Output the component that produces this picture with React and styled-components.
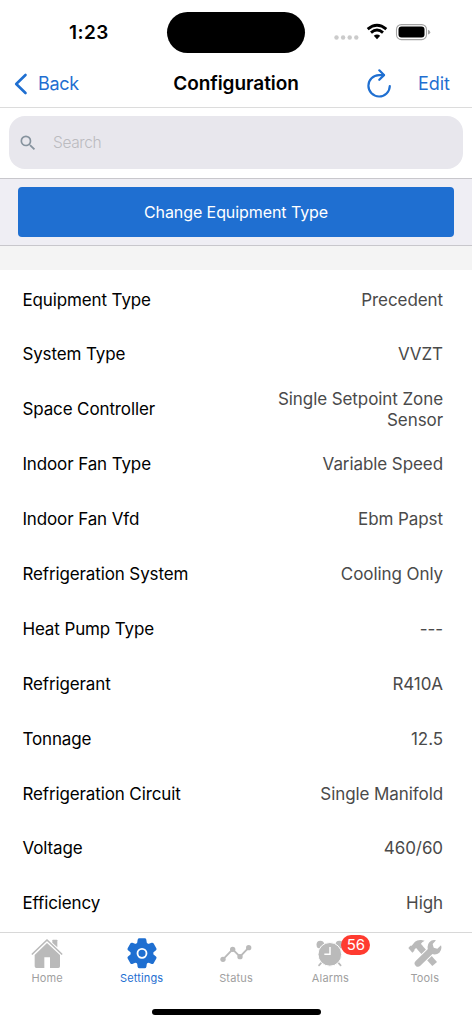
import React from "react";
import styled, { createGlobalStyle } from "styled-components";
import { MdSearch } from "react-icons/md";

const rows = [
  { label: "Equipment Type", value: "Precedent" },
  { label: "System Type", value: "VVZT" },
  { label: "Space Controller", value: "Single Setpoint Zone Sensor" },
  { label: "Indoor Fan Type", value: "Variable Speed" },
  { label: "Indoor Fan Vfd", value: "Ebm Papst" },
  { label: "Refrigeration System", value: "Cooling Only" },
  { label: "Heat Pump Type", value: "---" },
  { label: "Refrigerant", value: "R410A" },
  { label: "Tonnage", value: "12.5" },
  { label: "Refrigeration Circuit", value: "Single Manifold" },
  { label: "Voltage", value: "460/60" },
  { label: "Efficiency", value: "High" },
];

const HomeIcon = () => (
  <svg width="34" height="32" viewBox="90 36 102 96">
    <path
      d="M97 87 L141 45 L185 87"
      fill="none"
      stroke="currentColor"
      strokeWidth="5"
      strokeLinecap="round"
      strokeLinejoin="round"
    />
    <path
      d="M157 53 V46 Q157 44 159 44 H170 Q172 44 172 46 V67 Z"
      fill="currentColor"
    />
    <path
      d="M141 54 L180 90 V124 Q180 129 175 129 H150 V97 H133 V129 H109 Q104 129 104 124 V90 Z"
      fill="currentColor"
    />
  </svg>
);

const teeth = [0, 60, 120, 180, 240, 300];

const GearIcon = () => (
  <svg width="34" height="32" viewBox="-51 -49 102 96">
    <circle r="34" fill="currentColor" />
    {teeth.map((deg) => (
      <path
        key={deg}
        transform={`rotate(${deg})`}
        d="M-15 -28 L-13 -41 Q-12 -45 -8 -45 H8 Q12 -45 13 -41 L15 -28 Z"
        fill="currentColor"
      />
    ))}
    <circle r="13.500" fill="none" stroke="#fff" strokeWidth="5.500" />
  </svg>
);

const StatusIcon = () => (
  <svg width="34" height="32" viewBox="86 36 102 96">
    <path
      d="M98 103 L127 73 L149 95 L175 68"
      fill="none"
      stroke="currentColor"
      strokeWidth="5.500"
    />
    <g fill="currentColor">
      <circle cx="98" cy="103" r="8" />
      <circle cx="127" cy="73" r="8" />
      <circle cx="149" cy="95" r="8" />
      <circle cx="175" cy="68" r="8" />
    </g>
  </svg>
);

const AlarmIcon = () => (
  <svg width="34" height="32" viewBox="40 36 102 96">
    <g fill="currentColor">
      <circle cx="62" cy="59" r="11.500" />
      <circle cx="119" cy="59" r="11.500" />
    </g>
    <path
      d="M66 112 L58 121 M115 112 L123 121"
      stroke="currentColor"
      strokeWidth="5"
      strokeLinecap="round"
    />
    <circle cx="90.500" cy="88" r="35.500" fill="currentColor" stroke="#fff" strokeWidth="3" />
    <path d="M91 66 V88 H74" fill="none" stroke="#fff" strokeWidth="4.500" />
  </svg>
);

const ToolsIcon = () => (
  <svg width="34" height="32" viewBox="322 36 102 96">
    <path
      d="M323 69 L329 62 L333 62 L343 50 Q350 44 362 45 L372 47 Q363 51 361 56 L366 64 L354 76 L346 69 L341 74 L341 77 L335 83 Z"
      fill="currentColor"
    />
    <path d="M357 67 L402 117" stroke="currentColor" strokeWidth="19" fill="none" />
    <path
      d="M352 115 L392 76"
      stroke="#fff"
      strokeWidth="26"
      strokeLinecap="round"
    />
    <path
      d="M352 115 L392 76"
      stroke="currentColor"
      strokeWidth="20"
      strokeLinecap="round"
    />
    <path
      d="M406 46 L396 57 L399 68 L410 71 L421 61 Q425 74 416 83 Q407 91 394 87 L382 74 Q378 61 386 52 Q394 43 406 46 Z"
      fill="currentColor"
    />
  </svg>
);

const tabs = [
  { name: "Home", icon: <HomeIcon /> },
  { name: "Settings", icon: <GearIcon />, active: true },
  { name: "Status", icon: <StatusIcon /> },
  { name: "Alarms", icon: <AlarmIcon />, badge: 56 },
  { name: "Tools", icon: <ToolsIcon /> },
];

const App = () => {
  return (
    <Screen>
      <GlobalStyle />
      <StatusBar>
        <Clock>1:23</Clock>
        <Island />
        <Indicators>
          <svg width="98" height="20" viewBox="0 0 98 20">
            <g fill="#cbcbcb">
              <circle cx="3.500" cy="14.500" r="2.200" />
              <circle cx="10.100" cy="14.500" r="2.200" />
              <circle cx="16.700" cy="14.500" r="2.200" />
              <circle cx="23.300" cy="14.500" r="2.200" />
            </g>
            <g fill="none" stroke="#000" strokeWidth="2.900">
              <path d="M34.700 6.100 Q44 -1.600 53.300 6.100" />
              <path d="M38 9.700 Q44 4.500 50 9.700" />
            </g>
            <path d="M40.800 12.800 Q44 10 47.200 12.800 L44 16.200 Z" />
            <rect
              x="63.500"
              y="1.600"
              width="30"
              height="15"
              rx="4.800"
              fill="none"
              stroke="#a3a3a3"
              strokeWidth="1.100"
            />
            <rect x="65.500" y="3.500" width="26" height="11" rx="3" />
            <path d="M95 6.800 Q97.200 7.500 97.200 9.200 Q97.200 10.900 95 11.600 Z" fill="#a3a3a3" />
          </svg>
        </Indicators>
      </StatusBar>

      <NavBar>
        <BackButton>
          <svg width="14" height="22" viewBox="0 0 14 22">
            <path
              d="M11.500 2 L2.200 11 L11.500 20"
              fill="none"
              stroke="currentColor"
              strokeWidth="2.600"
              strokeLinecap="round"
              strokeLinejoin="round"
            />
          </svg>
          <span>Back</span>
        </BackButton>
        <Title>Configuration</Title>
        <NavActions>
          <svg width="26" height="30" viewBox="0 0 26 30">
            <g
              fill="none"
              stroke="currentColor"
              strokeWidth="2.200"
              strokeLinecap="round"
              strokeLinejoin="round"
            >
              <path d="M17.800 6.100 H13 A10.700 10.700 0 1 0 23.800 17" />
              <path d="M13.300 1.300 L18 6.100 L13.300 10.800" />
            </g>
          </svg>
          <NavLink>Edit</NavLink>
        </NavActions>
      </NavBar>

      <SearchArea>
        <SearchBox>
          <MdSearch />
          <input type="text" placeholder="Search" />
        </SearchBox>
      </SearchArea>

      <ActionPanel>
        <PrimaryButton>Change Equipment Type</PrimaryButton>
      </ActionPanel>
      <Spacer />

      <List>
        {rows.map(({ label, value }) => (
          <Row key={label}>
            <Label>{label}</Label>
            <Value>{value}</Value>
          </Row>
        ))}
      </List>

      <TabBar>
        {tabs.map(({ name, icon, active, badge }) => (
          <Tab key={name} $active={active}>
            <div className="iconWrapper">
              {icon}
              {badge && <Badge>{badge}</Badge>}
            </div>
            <p>{name}</p>
          </Tab>
        ))}
      </TabBar>
      <HomeIndicator />
    </Screen>
  );
};

export default App;

const GlobalStyle = createGlobalStyle`
  * {
    box-sizing: border-box;
  }

  body {
    margin: 0;
    background-color: #fff;
    font-family: Inter, "Liberation Sans", sans-serif;
  }

  p {
    margin: 0;
  }

  svg {
    display: block;
    flex-shrink: 0;
  }
`;

const Screen = styled.div`
  width: 472px;
  height: 1024px;
  display: flex;
  flex-direction: column;
  overflow: hidden;
  background-color: #fff;
`;

const StatusBar = styled.header`
  height: 60px;
  display: grid;
  grid-template-columns: 1fr 138px 1fr;
  padding-top: 12px;
  flex-shrink: 0;
`;

const Clock = styled.div`
  padding: 0 0 0 69px;
  font-size: 19px;
  font-weight: 600;
  line-height: 41px;
  letter-spacing: 0.4px;
`;

const Island = styled.div`
  height: 41px;
  border-radius: 21px;
  background-color: #000;
`;

const Indicators = styled.div`
  padding: 11px 0 0 28px;
`;

const NavBar = styled.nav`
  height: 48px;
  display: grid;
  grid-template-columns: 1fr auto 1fr;
  align-items: center;
  border-bottom: 1px solid #dcdcdc;
  font-size: 18px;
  flex-shrink: 0;
`;

const BackButton = styled.div`
  display: flex;
  align-items: center;
  gap: 10px;
  padding-left: 14px;
  color: #1f6fd1;
  letter-spacing: -0.3px;
`;

const Title = styled.h1`
  margin: 0;
  font-size: 19px;
  font-weight: 600;
  letter-spacing: -0.06px;
`;

const NavActions = styled.div`
  display: flex;
  align-items: center;
  justify-content: flex-end;
  gap: 26px;
  padding-right: 22px;
  color: #1f6fd1;
`;

const NavLink = styled.span`
  font-size: 18px;
`;

const SearchArea = styled.div`
  height: 71px;
  padding: 8px 9px 9px;
  border-bottom: 1px solid #c8c7cc;
  flex-shrink: 0;
`;

const SearchBox = styled.div`
  height: 53px;
  display: flex;
  align-items: center;
  gap: 15px;
  padding-left: 9px;
  border-radius: 16px;
  background-color: #e8e7ed;

  svg {
    font-size: 20px;
    color: #86939e;
  }

  input {
    width: 300px;
    padding: 0;
    border: none;
    outline: none;
    background: transparent;
    font-family: inherit;
    font-size: 15.5px;
    font-weight: 300;
    letter-spacing: -0.4px;

    &::placeholder {
      color: #bbbbc0;
    }
  }
`;

const ActionPanel = styled.div`
  height: 67px;
  padding: 8px 18px;
  border-bottom: 1px solid #c8c7cc;
  background-color: #efeef4;
  flex-shrink: 0;
`;

const PrimaryButton = styled.button`
  display: block;
  width: 100%;
  height: 50px;
  border: none;
  border-radius: 4px;
  background-color: #1f6fd1;
  color: #fff;
  font-family: inherit;
  font-size: 16px;
  letter-spacing: -0.08px;
`;

const Spacer = styled.div`
  height: 24px;
  background-color: #f4f4f4;
  flex-shrink: 0;
`;

const List = styled.div`
  flex: 1;
  min-height: 0;
  padding-top: 2.6px;
`;

const Row = styled.div`
  height: 54.9px;
  display: flex;
  align-items: center;
  justify-content: space-between;
  padding: 0 29px 0 22.4px;
  font-size: 17px;
  line-height: 21px;
  letter-spacing: -0.12px;
`;

const Label = styled.p`
  color: #000;
`;

const Value = styled.p`
  max-width: 200px;
  color: #4a4a4a;
  text-align: right;
  letter-spacing: -0.08px;
`;

const TabBar = styled.div`
  height: 66px;
  display: grid;
  grid-template-columns: repeat(5, 1fr);
  border-top: 1px solid #d8d8d8;
  background-color: #fff;
  flex-shrink: 0;
`;

const Tab = styled.div`
  display: flex;
  flex-direction: column;
  align-items: center;
  padding-top: 4px;
  color: ${({ $active }) => ($active ? "#1f6fd1" : "#bababa")};

  .iconWrapper {
    position: relative;
  }

  p {
    margin-top: 2px;
    font-size: 11px;
    line-height: 14px;
    letter-spacing: 0.15px;
    color: ${({ $active }) => ($active ? "#1f6fd1" : "#a0a0a0")};
  }
`;

const Badge = styled.span`
  position: absolute;
  top: -2px;
  left: 28px;
  width: 29px;
  height: 20px;
  border-radius: 10px;
  background-color: #ff3b30;
  color: #fff;
  font-size: 15px;
  line-height: 20px;
  text-align: center;
`;

const HomeIndicator = styled.div`
  width: 169px;
  height: 6px;
  margin: 11px auto 9px;
  border-radius: 3px;
  background-color: #000;
  flex-shrink: 0;
`;
